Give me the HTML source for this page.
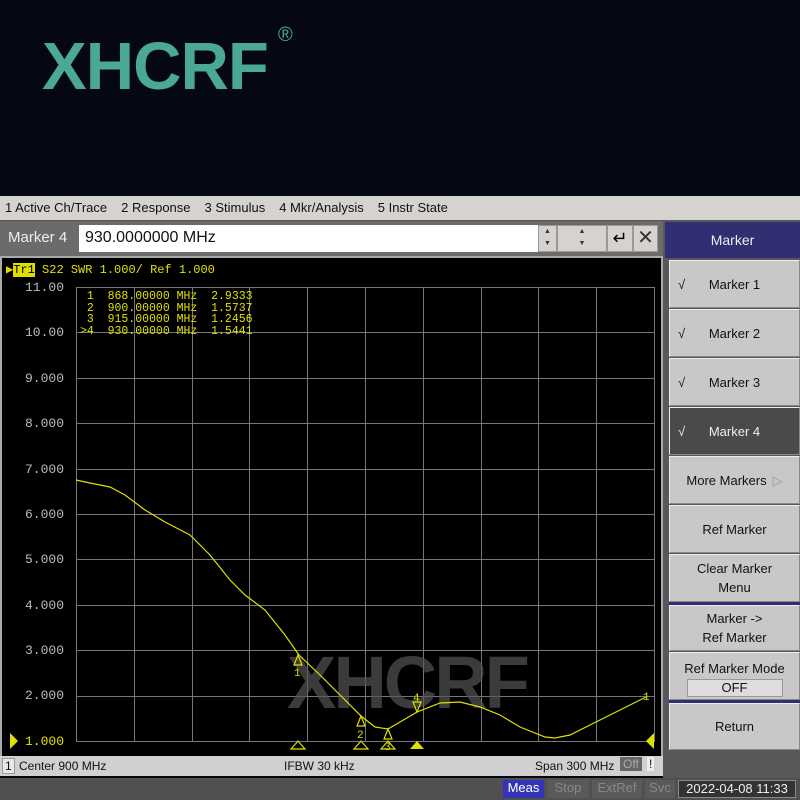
<!DOCTYPE html>
<html><head><meta charset="utf-8"><style>
*{margin:0;padding:0;box-sizing:border-box}
body{width:800px;height:800px;background:#050814;position:relative;overflow:hidden;font-family:"Liberation Sans",sans-serif}
.abs{position:absolute}
.logo{left:42px;top:28px;font-size:67px;font-weight:bold;color:#4aa894;letter-spacing:-1px}
.reg{left:278px;top:24px;font-size:20px;color:#4aa894}
.menu{left:0;top:196px;width:800px;height:24px;background:#d6d3ce;font-size:13px;color:#111;padding:4px 0 0 5px}
.menu span{margin-right:14px}
.mrow{left:0;top:221px;width:663px;height:35px;background:#6b6b6b}
.btn{background:#c8c8c8;border:1px solid #888;border-top-color:#eee;border-left-color:#eee;font-size:13px;color:#111;text-align:center;display:flex;align-items:center;justify-content:center;line-height:19px}
.mono{font-family:"Liberation Mono",monospace;font-size:12px;color:#e0e000}
.yl{font-family:"Liberation Mono",monospace;font-size:13px;color:#bbb;left:6px;width:58px;text-align:right}
</style></head><body>
<div class="abs logo">XHCRF</div>
<div class="abs reg">®</div>
<div class="abs menu"><span>1 Active Ch/Trace</span><span>2 Response</span><span>3 Stimulus</span><span>4 Mkr/Analysis</span><span>5 Instr State</span></div>
<div class="abs" style="left:0;top:220px;width:800px;height:1px;background:#555"></div>
<div class="abs mrow"></div>
<div class="abs" style="left:8px;top:229px;font-size:15px;color:#eee">Marker 4</div>
<div class="abs" style="left:79px;top:225px;width:459px;height:27px;background:#fff;font-size:16px;color:#111;padding:4px 0 0 6px">930.0000000 MHz</div>
<div class="abs" style="left:538px;top:225px;width:19px;height:27px;background:#d6d3ce;border:1px solid #999;font-size:7px;text-align:center;line-height:12px;color:#333">▲<br>▼</div>
<div class="abs" style="left:557px;top:225px;width:50px;height:27px;background:#d6d3ce;border:1px solid #999;font-size:7px;text-align:center;line-height:12px;color:#333">▲<br>▼</div>
<div class="abs" style="left:607px;top:225px;width:26px;height:27px;background:#d6d3ce;border:1px solid #999;font-size:18px;text-align:center;line-height:24px">↵</div>
<div class="abs" style="left:633px;top:225px;width:25px;height:27px;background:#d6d3ce;border:1px solid #999;font-size:20px;text-align:center;line-height:25px;color:#333">✕</div>
<div class="abs" style="left:0;top:256px;width:663px;height:500px;background:#000;border:2px solid #aaa;border-bottom:none"></div>
<div class="abs mono" style="left:6px;top:262px;white-space:pre"><span style="color:#e0e000">▶</span><span style="background:#e0e000;color:#000">Tr1</span> S22 SWR 1.000/ Ref 1.000</div>
<div class="abs yl" style="top:280px">11.00</div>
<div class="abs yl" style="top:325px">10.00</div>
<div class="abs yl" style="top:371px">9.000</div>
<div class="abs yl" style="top:416px">8.000</div>
<div class="abs yl" style="top:462px">7.000</div>
<div class="abs yl" style="top:507px">6.000</div>
<div class="abs yl" style="top:552px">5.000</div>
<div class="abs yl" style="top:598px">4.000</div>
<div class="abs yl" style="top:643px">3.000</div>
<div class="abs yl" style="top:688px">2.000</div>
<div class="abs yl" style="top:734px;color:#e0e000">1.000</div>
<svg class="abs" style="left:0;top:0" width="800" height="800">
<g stroke="#777" stroke-width="1" fill="none">
<rect x="76.5" y="287.5" width="578" height="454"/>
<path d="M134.5 287V741M192.5 287V741M249.5 287V741M307.5 287V741M365.5 287V741M423.5 287V741M481.5 287V741M538.5 287V741M596.5 287V741M76 332.5H654M76 378.5H654M76 423.5H654M76 469.5H654M76 514.5H654M76 559.5H654M76 605.5H654M76 650.5H654M76 696.5H654"/>
</g>
<text x="287" y="708" font-family="Liberation Sans" font-weight="bold" font-size="74" fill="#555" opacity="0.7" letter-spacing="-3">XHCRF</text>
<polyline fill="none" stroke="#e0e000" stroke-width="1.2" points="76,480 90,483 110,487 125,495 145,510 165,522 190,535 210,555 230,580 245,595 265,610 285,635 299,655 320,675 340,695 361,716 375,727 388,729 400,722 417,712 440,703 460,702 480,707 500,715 520,727 545,737 555,738 570,735 590,725 610,715 630,705 646,697"/>
<g fill="none" stroke="#e0e000" stroke-width="1.2">
<path d="M298 655l-4 10h8z"/><path d="M361 716l-4 10h8z"/><path d="M388 729l-4 10h8z"/><path d="M417 712l-4 -10h8z"/>
<path d="M291 749l7-8 7 8z M354 749l7-8 7 8z M381 749l7-8 7 8z"/>
</g>
<path d="M410 749l7-8 7 8z M10 733v16l8-8z M654 733v16l-8-8z" fill="#e0e000"/>
<g font-family="Liberation Mono" font-size="11" fill="#e0e000">
<text x="294" y="676">1</text><text x="357" y="738">2</text><text x="384" y="750">3</text><text x="413" y="701">4</text><text x="643" y="700">1</text></g>
</svg>
<div class="abs mono" style="left:80px;top:291px;white-space:pre;line-height:11.7px;font-size:11.5px"> 1  868.00000 MHz  2.9333
 2  900.00000 MHz  1.5737
 3  915.00000 MHz  1.2456
>4  930.00000 MHz  1.5441</div>
<div class="abs" style="left:0;top:756px;width:663px;height:20px;background:#d0d0d0;font-size:12px;color:#111">
<span class="abs" style="left:2px;top:2px;border:1px solid #999;padding:0 2px;background:#e8e8e8">1</span>
<span class="abs" style="left:19px;top:3px">Center 900 MHz</span>
<span class="abs" style="left:284px;top:3px">IFBW 30 kHz</span>
<span class="abs" style="left:535px;top:3px">Span 300 MHz</span>
<span class="abs" style="left:620px;top:1px;background:#666;color:#aaa;padding:0 3px">Off</span>
<span class="abs" style="left:647px;top:1px;background:#eee;padding:0 2px">!</span></div>
<div class="abs" style="left:0;top:778px;width:800px;height:22px;background:#505050"></div>
<div class="abs" style="left:503px;top:780px;width:41px;height:18px;background:#3434b8;color:#fff;font-size:13px;text-align:center">Meas</div>
<div class="abs" style="left:547px;top:780px;width:42px;height:18px;background:#5a5a5a;color:#888;font-size:13px;text-align:center">Stop</div>
<div class="abs" style="left:592px;top:780px;width:50px;height:18px;background:#5a5a5a;color:#888;font-size:13px;text-align:center">ExtRef</div>
<div class="abs" style="left:645px;top:780px;width:30px;height:18px;background:#5a5a5a;color:#888;font-size:13px;text-align:center">Svc</div>
<div class="abs" style="left:678px;top:780px;width:118px;height:18px;background:#333;color:#eee;font-size:13px;text-align:center;border:1px solid #888">2022-04-08 11:33</div>
<div class="abs" style="left:663px;top:220px;width:137px;height:558px;background:#585858"></div>
<div class="abs" style="left:665px;top:222px;width:135px;height:36px;background:#2f2f72;color:#eee;font-size:14px;text-align:center;line-height:36px">Marker</div>
<div class="abs btn" style="left:669px;top:260px;width:131px;height:48px"><span class="abs" style="left:8px;top:14px">√</span>Marker 1</div>
<div class="abs btn" style="left:669px;top:309px;width:131px;height:48px"><span class="abs" style="left:8px;top:14px">√</span>Marker 2</div>
<div class="abs btn" style="left:669px;top:358px;width:131px;height:48px"><span class="abs" style="left:8px;top:14px">√</span>Marker 3</div>
<div class="abs btn" style="left:669px;top:407px;width:131px;height:48px;background:#4a4a4a;color:#eee"><span class="abs" style="left:8px;top:14px">√</span>Marker 4</div>
<div class="abs btn" style="left:669px;top:456px;width:131px;height:48px">More Markers <span style="color:#999;margin-left:6px">▷</span></div>
<div class="abs btn" style="left:669px;top:505px;width:131px;height:48px">Ref Marker</div>
<div class="abs btn" style="left:669px;top:554px;width:131px;height:48px">Clear Marker<br>Menu</div>
<div class="abs" style="left:669px;top:602px;width:131px;height:3px;background:#2f2f72"></div>
<div class="abs btn" style="left:669px;top:605px;width:131px;height:46px">Marker -&gt;<br>Ref Marker</div>
<div class="abs btn" style="left:669px;top:652px;width:131px;height:48px;flex-direction:column;justify-content:flex-start;padding-top:6px">Ref Marker Mode<div style="width:96px;height:18px;background:#ddd;border:1px solid #999;margin-top:1px;line-height:16px">OFF</div></div>
<div class="abs" style="left:669px;top:700px;width:131px;height:3px;background:#2f2f72"></div>
<div class="abs btn" style="left:669px;top:703px;width:131px;height:47px">Return</div>
</body></html>
